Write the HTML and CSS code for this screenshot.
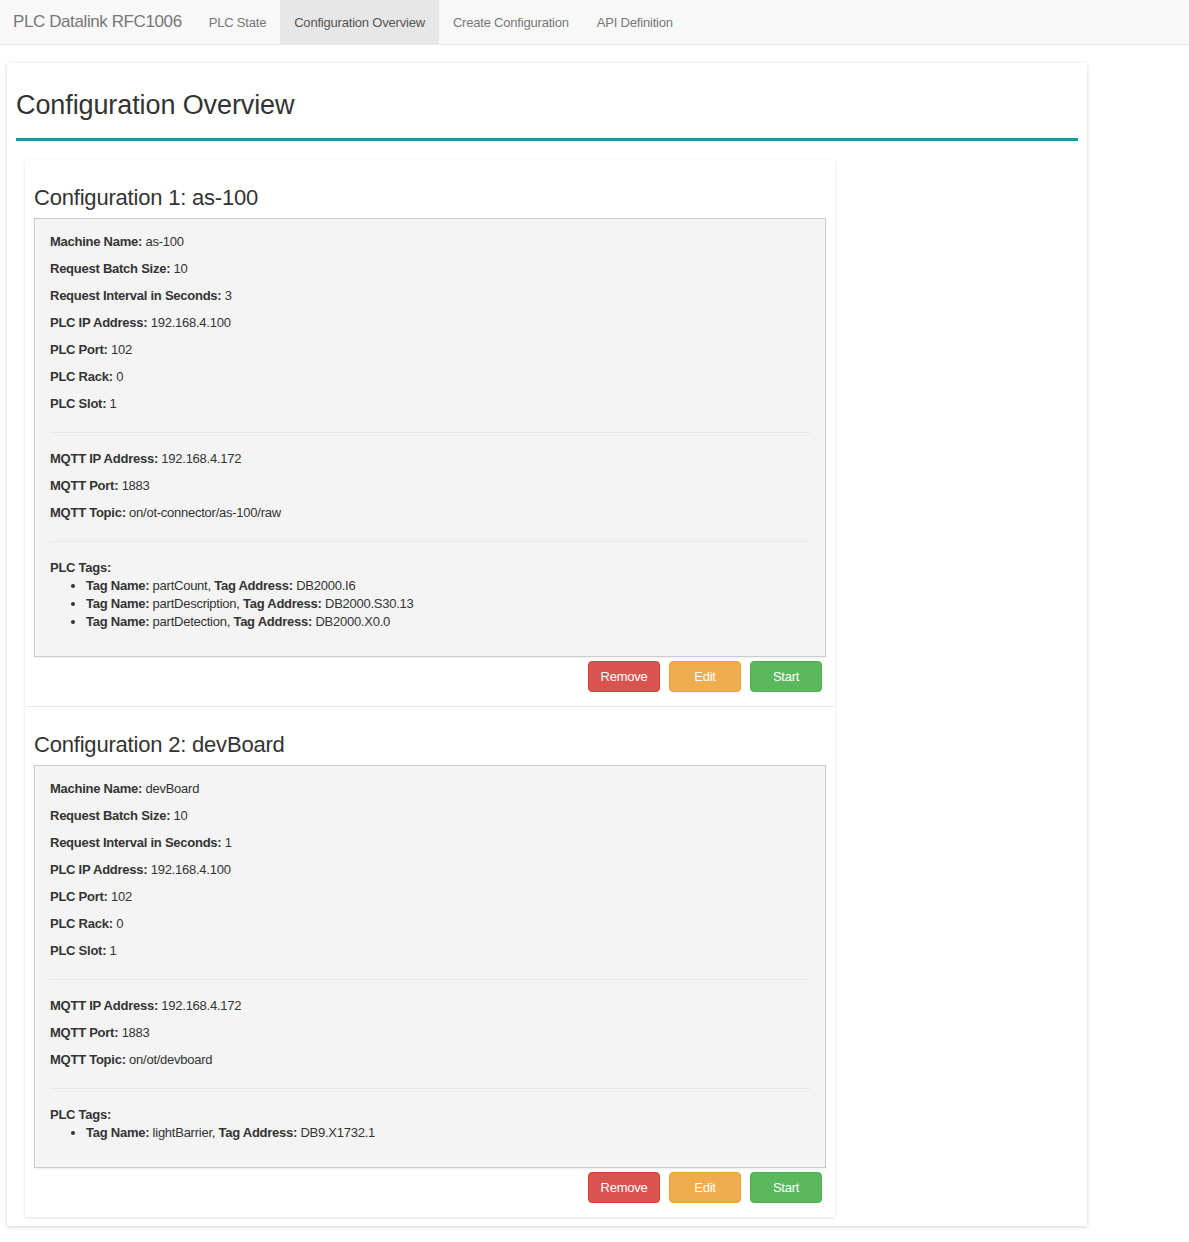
FILE: index.html
```html
<!DOCTYPE html>
<html>
<head>
<meta charset="utf-8">
<title>PLC Datalink RFC1006</title>
<link rel="stylesheet" href="styles.css">
</head>
<body>
<nav class="navbar">
  <a class="brand">PLC Datalink RFC1006</a>
  <ul class="nav">
    <li><a>PLC State</a></li>
    <li class="active"><a>Configuration Overview</a></li>
    <li><a>Create Configuration</a></li>
    <li><a>API Definition</a></li>
  </ul>
</nav>
<main class="page">
  <h1 class="page-title">Configuration Overview</h1>
  <div class="configs">
    <section class="config">
      <h2 class="config-title">Configuration 1: as-100</h2>
      <div class="well">
        <p><b>Machine Name:</b> as-100</p>
        <p><b>Request Batch Size:</b> 10</p>
        <p><b>Request Interval in Seconds:</b> 3</p>
        <p><b>PLC IP Address:</b> 192.168.4.100</p>
        <p><b>PLC Port:</b> 102</p>
        <p><b>PLC Rack:</b> 0</p>
        <p><b>PLC Slot:</b> 1</p>
        <hr>
        <p><b>MQTT IP Address:</b> 192.168.4.172</p>
        <p><b>MQTT Port:</b> 1883</p>
        <p><b>MQTT Topic:</b> on/ot-connector/as-100/raw</p>
        <hr>
        <div class="tags-label"><b>PLC Tags:</b></div>
        <ul class="tags">
          <li><b>Tag Name:</b> partCount, <b>Tag Address:</b> DB2000.I6</li>
          <li><b>Tag Name:</b> partDescription, <b>Tag Address:</b> DB2000.S30.13</li>
          <li><b>Tag Name:</b> partDetection, <b>Tag Address:</b> DB2000.X0.0</li>
        </ul>
      </div>
      <div class="actions">
        <button class="btn btn-danger">Remove</button>
        <button class="btn btn-warning">Edit</button>
        <button class="btn btn-success">Start</button>
      </div>
    </section>
    <section class="config">
      <h2 class="config-title">Configuration 2: devBoard</h2>
      <div class="well">
        <p><b>Machine Name:</b> devBoard</p>
        <p><b>Request Batch Size:</b> 10</p>
        <p><b>Request Interval in Seconds:</b> 1</p>
        <p><b>PLC IP Address:</b> 192.168.4.100</p>
        <p><b>PLC Port:</b> 102</p>
        <p><b>PLC Rack:</b> 0</p>
        <p><b>PLC Slot:</b> 1</p>
        <hr>
        <p><b>MQTT IP Address:</b> 192.168.4.172</p>
        <p><b>MQTT Port:</b> 1883</p>
        <p><b>MQTT Topic:</b> on/ot/devboard</p>
        <hr>
        <div class="tags-label"><b>PLC Tags:</b></div>
        <ul class="tags">
          <li><b>Tag Name:</b> lightBarrier, <b>Tag Address:</b> DB9.X1732.1</li>
        </ul>
      </div>
      <div class="actions">
        <button class="btn btn-danger">Remove</button>
        <button class="btn btn-warning">Edit</button>
        <button class="btn btn-success">Start</button>
      </div>
    </section>
  </div>
</main>
</body>
</html>
```
FILE: styles.css
```css
* { box-sizing: border-box; }
html, body { margin: 0; padding: 0; }
body {
  font-family: "Liberation Sans", Arial, Helvetica, sans-serif;
  font-size: 13px;
  letter-spacing: -0.25px;
  color: #333;
  background: #fff;
}
.navbar {
  display: flex;
  align-items: stretch;
  height: 45px;
  background: #f8f8f8;
  border-bottom: 1px solid #e7e7e7;
}
.brand {
  display: flex;
  align-items: center;
  padding: 0 13px;
  font-size: 17px;
  letter-spacing: -0.4px;
  color: #777;
}
.nav {
  display: flex;
  margin: 0;
  padding: 0;
  list-style: none;
}
.nav li a {
  display: flex;
  align-items: center;
  height: 44px;
  padding: 0 14px;
  color: #777;
  font-size: 13px;
  letter-spacing: -0.2px;
}
.nav li.active a {
  background: #e7e7e7;
  color: #555;
}
.page {
  width: 1080px;
  margin: 18px 0 9px 7px;
  padding: 1px 9px 9px 9px;
  background: #fff;
  box-shadow: 0 1px 4px rgba(0,0,0,0.18);
}
.page-title {
  margin: 24px 0 0 0;
  padding-bottom: 16px;
  font-size: 27px;
  font-weight: 400;
  letter-spacing: -0.1px;
  line-height: 34px;
  border-bottom: 3px solid #2590a8;
}
.configs {
  margin: 19px 0 0 9px;
  width: 810px;
}
.config {
  padding: 1px 9px 14px 9px;
  background: #fff;
  box-shadow: 0 1px 3px rgba(0,0,0,0.12);
}
.config + .config { margin-top: 1px; }
.config-title {
  margin: 24px 0 7px 0;
  font-size: 22px;
  font-weight: 400;
  letter-spacing: -0.2px;
  line-height: 26px;
}
.well {
  background: #f4f4f4;
  border: 1px solid #ccc;
  padding: 14px 15px 18px 15px;
  box-shadow: 0 1px 2px rgba(0,0,0,0.08);
}
.well p {
  margin: 0 0 10px 0;
  line-height: 17px;
}
.well b { font-weight: 700; }
.well hr {
  border: 0;
  border-top: 1px solid #e6e6e6;
  margin: 20px 0 17px 0;
}
.tags-label { line-height: 18px; }
.tags {
  margin: 0 0 7px 0;
  padding-left: 36px;
  line-height: 18px;
}
.actions {
  display: flex;
  justify-content: flex-end;
  gap: 9px;
  padding: 4px 4px 0 0;
}
.btn {
  width: 72px;
  height: 31px;
  border: 1px solid transparent;
  border-radius: 4px;
  font-family: inherit;
  font-size: 13px;
  letter-spacing: -0.25px;
  color: #fff;
  padding: 0;
}
.btn-danger { background: #d9534f; border-color: #d43f3a; }
.btn-warning { background: #f0ad4e; border-color: #eea236; }
.btn-success { background: #5cb85c; border-color: #4cae4c; }
```
